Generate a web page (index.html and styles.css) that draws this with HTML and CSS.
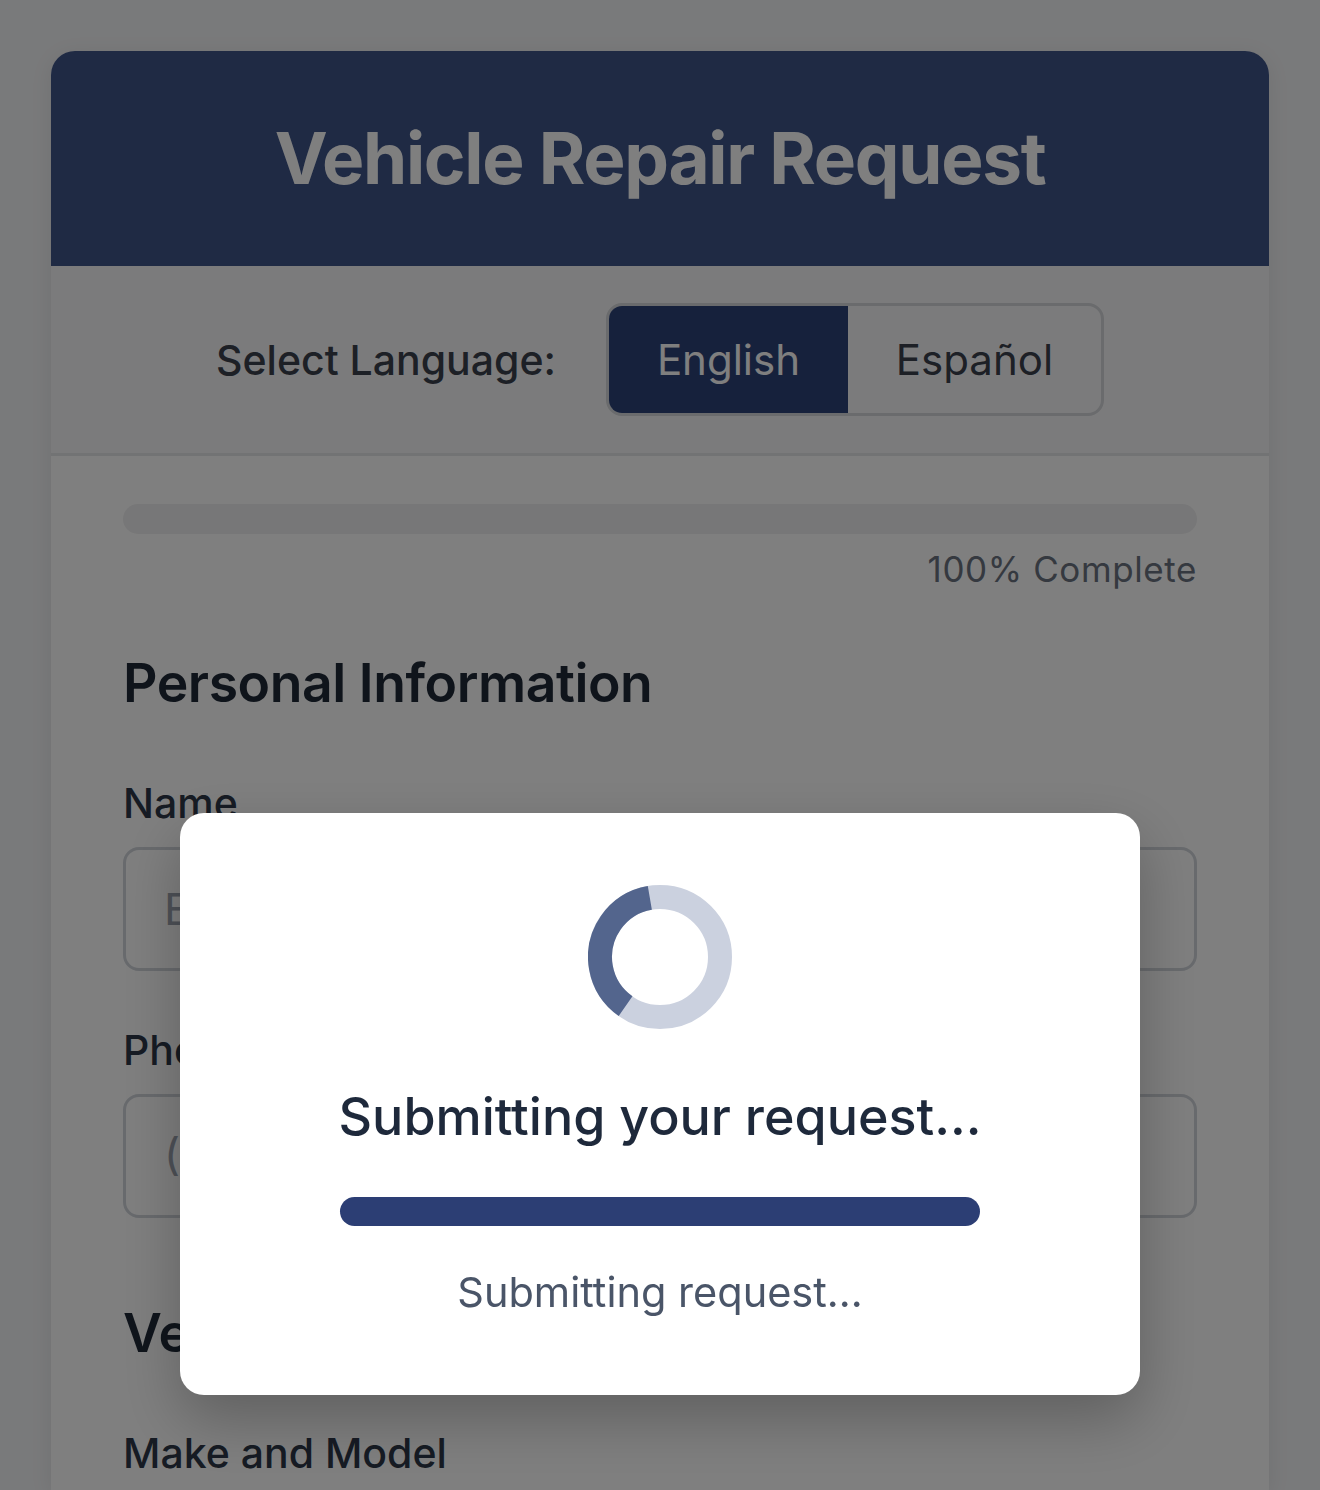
FILE: index.html
```html
<!DOCTYPE html>
<html lang="en">
<head>
<meta charset="utf-8">
<title>Vehicle Repair Request</title>
<link rel="stylesheet" href="styles.css">
</head>
<body>
<div class="card">
  <header class="card-header">
    <h1 class="title">Vehicle Repair Request</h1>
  </header>
  <div class="lang-bar">
    <span class="lang-label">Select Language:</span>
    <div class="lang-toggle">
      <button class="lang-btn active">English</button>
      <button class="lang-btn">Español</button>
    </div>
  </div>
  <div class="content">
    <div class="progress-track"><div class="progress-fill" style="width:100%"></div></div>
    <div class="progress-text">100% Complete</div>

    <section class="section">
      <h2 class="section-title">Personal Information</h2>
      <div class="field">
        <label class="field-label">Name</label>
        <input class="field-input" type="text" placeholder="Enter your full name">
      </div>
      <div class="field">
        <label class="field-label">Phone</label>
        <input class="field-input" type="text" placeholder="(555) 123-4567">
      </div>
    </section>

    <section class="section">
      <h2 class="section-title">Vehicle Information</h2>
      <div class="field">
        <label class="field-label">Make and Model</label>
        <input class="field-input" type="text" placeholder="e.g. Toyota Camry">
      </div>
    </section>
  </div>
</div>

<div class="overlay">
  <div class="modal">
    <svg class="spinner" width="144" height="144" viewBox="0 0 144 144">
      <circle cx="72" cy="72" r="60" fill="none" stroke="#cbd1df" stroke-width="24"/>
      <circle cx="72" cy="72" r="60" fill="none" stroke="#53658d" stroke-width="24" stroke-dasharray="141.4 377" transform="rotate(125 72 72)"/>
    </svg>
    <h3 class="modal-title">Submitting your request...</h3>
    <div class="modal-bar"></div>
    <p class="modal-status">Submitting request...</p>
  </div>
</div>
</body>
</html>
```

FILE: styles.css
```css
* { box-sizing: border-box; }

html, body {
  margin: 0;
  padding: 0;
}

body {
  background: #f3f4f6;
  font-family: Inter, "Noto Sans", "Liberation Sans", sans-serif;
  padding: 51px 51px 0;
  height: 1490px;
  overflow: hidden;
}

.card {
  background: #ffffff;
  border-radius: 24px 24px 0 0;
  box-shadow: 0 4px 22px rgba(0, 0, 0, 0.08);
  overflow: hidden;
  height: 1439px;
}

.card-header {
  background: #3e5488;
  height: 215px;
  display: flex;
  align-items: center;
  justify-content: center;
}

.title {
  margin: 0;
  color: #ffffff;
  font-size: 71px;
  font-weight: 700;
  letter-spacing: -1.3px;
  line-height: 1.2;
}

.lang-bar {
  background: #f7f7f8;
  border-bottom: 3px solid #e5e6e9;
  padding: 37px 0;
  display: flex;
  align-items: center;
  justify-content: center;
  gap: 50px;
}

.lang-label {
  font-size: 41px;
  color: #3a404c;
  font-weight: 500;
}

.lang-toggle {
  display: flex;
  border: 3px solid #d4d6da;
  border-radius: 16px;
  overflow: hidden;
}

.lang-btn {
  border: none;
  background: transparent;
  font-family: inherit;
  font-size: 42px;
  color: #3a404c;
  height: 107px;
  padding: 0;
  width: 239px;
  line-height: 1;
}

.lang-btn + .lang-btn { width: 253px; }

.lang-btn.active {
  background: #2c4278;
  color: #ffffff;
}

.content {
  padding: 48px 72px 0;
}

.progress-track {
  height: 30px;
  border-radius: 15px;
  background: #efeff0;
  overflow: hidden;
}

.progress-fill {
  height: 100%;
  background: #efeff0;
}

.progress-text {
  text-align: right;
  font-size: 35px;
  letter-spacing: 0.6px;
  line-height: 51px;
  margin-top: 10px;
  color: #6b7280;
}

.section {
  margin-top: 55px;
}

.section + .section {
  margin-top: 82px;
}

.section-title {
  margin: 0 0 60px;
  font-size: 53.5px;
  font-weight: 600;
  letter-spacing: -0.45px;
  line-height: 65px;
  color: #1f2937;
}

.field + .field {
  margin-top: 51px;
}

.field-label {
  display: block;
  font-size: 41px;
  line-height: 57px;
  font-weight: 500;
  color: #2d3748;
  margin-bottom: 15px;
}

.field-input {
  display: block;
  width: 100%;
  height: 124px;
  border: 3px solid #d1d5db;
  border-radius: 16px;
  padding: 0 38px;
  font-family: inherit;
  font-size: 44px;
  color: #1f2937;
  background: #ffffff;
}

.field-input::placeholder {
  color: #9ca3af;
}

.overlay {
  position: fixed;
  inset: 0;
  background: rgba(0, 0, 0, 0.5);
  display: flex;
  justify-content: center;
  align-items: flex-start;
  padding-top: 813px;
}

.modal {
  width: 960px;
  background: #ffffff;
  border-radius: 24px;
  box-shadow: 0 24px 60px rgba(0, 0, 0, 0.25);
  padding: 72px 160px 73px;
  display: flex;
  flex-direction: column;
  align-items: center;
}

.spinner {
  display: block;
  width: 144px;
  height: 144px;
}

.modal-title {
  margin: 58px 0 0;
  font-size: 52px;
  line-height: 60px;
  font-weight: 500;
  color: #1e293b;
  white-space: nowrap;
}

.modal-bar {
  width: 100%;
  height: 29px;
  border-radius: 15px;
  background: #2c3e74;
  margin-top: 50px;
}

.modal-status {
  margin: 36px 0 0;
  font-size: 41.5px;
  line-height: 60px;
  color: #4a5568;
}
```
